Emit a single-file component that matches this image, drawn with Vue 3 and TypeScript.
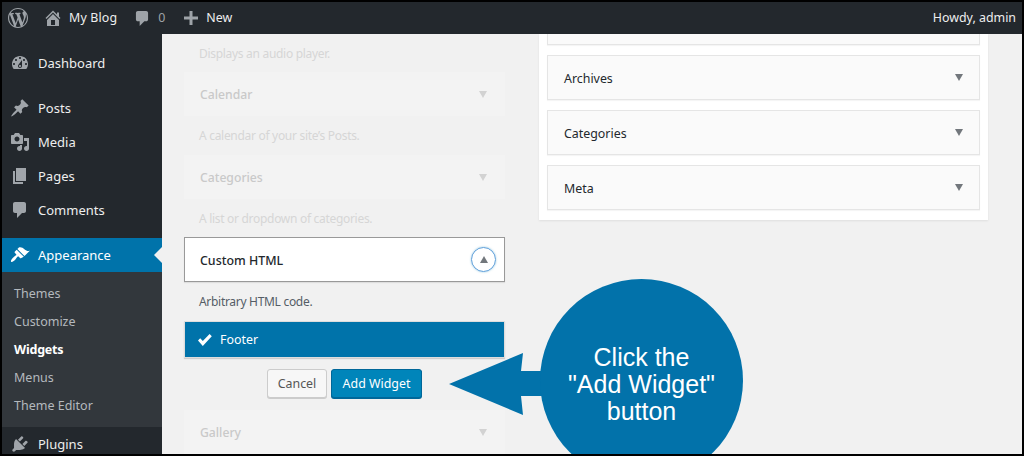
<script setup lang="ts">
const P = {
  wp: 'M20 10c0-5.51-4.49-10-10-10C4.48 0 0 4.49 0 10c0 5.52 4.48 10 10 10 5.51 0 10-4.48 10-10zM7.78 15.37L4.37 6.22c.55-.02 1.17-.08 1.17-.08.5-.06.44-1.13-.06-1.11 0 0-1.45.11-2.37.11-.18 0-.37 0-.58-.01C4.12 2.69 6.87 1.11 10 1.11c2.33 0 4.45.87 6.05 2.34-.68-.11-1.65.39-1.65 1.58 0 .74.45 1.36.9 2.1.35.61.55 1.36.55 2.46 0 1.49-1.4 5-1.4 5l-3.03-8.37c.54-.02.82-.17.82-.17.5-.05.44-1.25-.06-1.22 0 0-1.44.12-2.38.12-.87 0-2.33-.12-2.33-.12-.5-.03-.56 1.2-.06 1.22l.92.08 1.26 3.41zM17.41 10c.24-.64.74-1.87.43-4.25.7 1.29 1.05 2.71 1.05 4.25 0 3.29-1.73 6.24-4.4 7.78.97-2.59 1.94-5.2 2.92-7.78zM6.1 18.09C3.12 16.65 1.11 13.53 1.11 10c0-1.3.23-2.48.72-3.59C3.25 10.3 4.67 14.2 6.1 18.09zm4.03-6.63l2.58 6.98c-.86.29-1.76.45-2.71.45-.79 0-1.57-.11-2.29-.33.81-2.38 1.62-4.74 2.42-7.1z',
  home: 'M16 8.5l1.53 1.53-1.06 1.06L10 4.62l-6.47 6.47-1.06-1.06L10 2.5l4 4v-2h2v4zm-6-2.46l6 5.99V18H4v-5.97zM12 17v-5H8v5h4z',
  comment: 'M5 2h9c1.1 0 2 .9 2 2v7c0 1.1-.9 2-2 2h-2l-5 5v-5H5c-1.1 0-2-.9-2-2V4c0-1.1.9-2 2-2z',
  plus: 'M17 8.5v3h-5.5V17h-3v-5.5H3v-3h5.5V3h3v5.5z',
  dash: 'M3.76 16h12.48c1.1-1.37 1.76-3.11 1.76-5 0-4.42-3.58-8-8-8s-8 3.58-8 8c0 1.89.66 3.63 1.76 5zM10 4c.55 0 1 .45 1 1s-.45 1-1 1-1-.45-1-1 .45-1 1-1zM6 6c.55 0 1 .45 1 1s-.45 1-1 1-1-.45-1-1 .45-1 1-1zm8 0c.55 0 1 .45 1 1s-.45 1-1 1-1-.45-1-1 .45-1 1-1zm-5.37 5.55L12 7v6c0 1.1-.9 2-2 2s-2-.9-2-2c0-.57.24-1.08.63-1.45zM4 10c.55 0 1 .45 1 1s-.45 1-1 1-1-.45-1-1 .45-1 1-1zm12 0c.55 0 1 .45 1 1s-.45 1-1 1-1-.45-1-1 .45-1 1-1zm-5 3c0-.55-.45-1-1-1s-1 .45-1 1 .45 1 1 1 1-.45 1-1z',
  pin: 'M10.44 3.02l1.82-1.82 6.36 6.35-1.83 1.82c-1.05-.68-2.48-.57-3.41.36l-.75.75c-.92.93-1.04 2.35-.35 3.41l-1.83 1.82-2.41-2.41-2.8 2.79c-.42.42-3.38 2.71-3.8 2.29s1.86-3.39 2.28-3.81l2.79-2.79L4.1 9.36l1.83-1.82c1.05.69 2.48.57 3.4-.36l.75-.75c.93-.92 1.05-2.35.36-3.41z',
  media: 'M13 11V4c0-.55-.45-1-1-1h-1.67L9 1H5L3.67 3H2c-.55 0-1 .45-1 1v7c0 .55.45 1 1 1h10c.55 0 1-.45 1-1zM7 4.5c1.38 0 2.5 1.12 2.5 2.5S8.38 9.5 7 9.5 4.5 8.38 4.5 7 5.62 4.5 7 4.5zM14 6h5v10.5c0 1.38-1.12 2.5-2.5 2.5S14 17.88 14 16.5s1.12-2.5 2.5-2.5c.17 0 .34.02.5.05V9h-3V6zm-4 8.05V13h2v3.5c0 1.38-1.12 2.5-2.5 2.5S7 17.88 7 16.5 8.12 14 9.5 14c.17 0 .34.02.5.05z',
  pages: 'M6 15V2h10v13H6zm-1 1h8v2H3V5h2v11z',
  brush: 'M14.48 11.06L7.41 3.99l1.5-1.5c.5-.56 2.3-.47 3.51.32 1.21.8 1.43 1.28 2.91 2.1 1.18.64 2.45 1.26 4.45.85zm-.71.71L6.7 4.7 4.93 6.47c-.39.39-.39 1.02 0 1.41l1.06 1.06c.39.39.39 1.03 0 1.42-.6.6-1.43 1.11-2.21 1.69-.35.26-.7.53-1.01.84-1.34 1.34-2.37 3.04-1.62 3.79.75.75 2.45-.28 3.79-1.62.31-.31.58-.66.84-1.01.58-.78 1.09-1.61 1.69-2.21.39-.39 1.03-.39 1.42 0l1.06 1.06c.39.39 1.02.39 1.41 0z',
  plug: 'M13.11 4.36L9.87 7.6 8 5.73l3.24-3.24c.35-.34 1.05-.2 1.56.32.52.51.66 1.21.31 1.55zm-8 1.77l.91-1.12 9.01 9.01-1.19.84c-.71.71-2.63 1.16-3.82 1.16H6.14L4.9 17.26c-.59.59-1.54.59-2.12 0-.59-.58-.59-1.53 0-2.12l1.24-1.24v-3.88c0-1.13.4-3.19 1.09-3.89zm7.26 3.97l3.24-3.24c.34-.35 1.04-.21 1.55.31.52.51.66 1.21.31 1.55l-3.24 3.25z',
}
const topItems = [
  { label: 'Posts', icon: P.pin },
  { label: 'Media', icon: P.media },
  { label: 'Pages', icon: P.pages },
  { label: 'Comments', icon: P.comment },
]
const subItems = ['Themes', 'Customize', 'Widgets', 'Menus', 'Theme Editor']
const dimWidgets = [
  { title: 'Calendar', desc: 'A calendar of your site\u2019s Posts.' },
  { title: 'Categories', desc: 'A list or dropdown of categories.' },
]
const rightWidgets = ['Archives', 'Categories', 'Meta']
</script>

<template>
  <div class="frame">
    <header class="adminbar">
      <svg class="wp" viewBox="0 0 20 20"><path :d="P.wp" /></svg>
      <svg class="home" viewBox="0 0 20 20"><path :d="P.home" /></svg>
      <span class="blog">My Blog</span>
      <svg class="bubble" viewBox="2 1 15 17"><path :d="P.comment" /></svg>
      <span class="count">0</span>
      <svg class="plus" viewBox="3 3 14 14"><path :d="P.plus" /></svg>
      <span class="new">New</span>
      <span class="howdy">Howdy, admin</span>
    </header>
    <div class="body">
      <nav class="sidebar">
        <a class="item first"><svg viewBox="0 0 20 20"><path :d="P.dash" /></svg>Dashboard</a>
        <div class="sep"></div>
        <a v-for="it in topItems" :key="it.label" class="item">
          <svg viewBox="0 0 20 20"><path :d="it.icon" /></svg>{{ it.label }}
        </a>
        <div class="sep"></div>
        <a class="item active"><svg viewBox="0 0 20 20"><path :d="P.brush" /></svg>Appearance<i class="notch"></i></a>
        <ul class="sub">
          <li v-for="s in subItems" :key="s" :class="{ cur: s === 'Widgets' }">{{ s }}</li>
        </ul>
        <a class="item"><svg viewBox="0 0 20 20"><path :d="P.plug" /></svg>Plugins</a>
      </nav>
      <main class="content">
        <section class="available">
          <p class="desc dim first-desc">Displays an audio player.</p>
          <template v-for="w in dimWidgets" :key="w.title">
            <div class="wbox dimbox"><span>{{ w.title }}</span><i class="tri"></i></div>
            <p class="desc dim">{{ w.desc }}</p>
          </template>
          <div class="wbox open">
            <span>Custom HTML</span>
            <b class="toggle"><i class="tri up"></i></b>
          </div>
          <p class="desc">Arbitrary HTML code.</p>
          <div class="chooser">
            <svg viewBox="0 0 16 14"><path d="M1 7.5l2.2-2.2 2.6 2.7L12.6 1l2.2 2.2-9 9.8z" /></svg>
            Footer
          </div>
          <div class="actions">
            <button class="btn cancel">Cancel</button>
            <button class="btn primary">Add Widget</button>
          </div>
          <div class="wbox dimbox gallery"><span>Gallery</span><i class="tri"></i></div>
        </section>
        <aside class="panel">
          <div class="rbox stub"></div>
          <div v-for="r in rightWidgets" :key="r" class="rbox"><span>{{ r }}</span><i class="tri"></i></div>
        </aside>
      </main>
    </div>
    <div class="callout">
      <svg class="arrow" viewBox="0 0 100 62"><path d="M0 31L74 0l-2 18h28v25H72l2 19z" /></svg>
      <div class="bubble-big">Click the<br />"Add Widget"<br />button</div>
    </div>
  </div>
</template>

<style>
html, body { margin: 0; background: #000; }
</style>

<style scoped>
.frame {
  position: relative; box-sizing: border-box; width: 1024px; height: 456px;
  border: 2px solid #000; overflow: hidden; background: #f1f1f1;
  font-family: "Noto Sans", "Open Sans", sans-serif; font-size: 12.4px; color: #23282d;
  display: flex; flex-direction: column;
}
svg { fill: currentColor; display: block; flex: none; }
.adminbar {
  height: 32px; flex: none; background: #23282d; color: #eee; display: flex; align-items: center; padding-bottom: 1px; box-sizing: border-box;
}
.adminbar svg { color: #9ea3a8; }
.wp { width: 20px; height: 20px; margin-left: 6px; }
.home { width: 20px; height: 20px; margin-left: 15px; }
.blog { margin-left: 6px; letter-spacing: .15px; }
.bubble { width: 14px; height: 16px; margin-left: 18px; }
.count { margin-left: 9px; color: #9ea3a8; }
.plus { width: 14px; height: 14px; margin-left: 19px; }
.new { margin-left: 8px; }
.howdy { margin-left: auto; margin-right: 6px; }
.body { flex: 1; min-height: 0; display: flex; }
.sidebar { width: 160px; flex: none; background: #23282d; color: #eee; }
.item {
  position: relative; height: 34px; display: flex; align-items: center; font-size: 13px; color: #eee; padding-bottom: 1px; box-sizing: border-box;
}
.item svg { width: 20px; height: 20px; margin: 0 8px; color: #a0a5aa; }
.first { margin-top: 12px; }
.sep { height: 11px; }
.active { background: #0073aa; color: #fff; }
.active svg { color: #fff; }
.notch {
  position: absolute; right: 0; top: 9px; border: 8px solid transparent; border-right-color: #f1f1f1; border-left: 0;
}
.sub { margin: 0; padding: 8px 0 7px; list-style: none; background: #32373c; color: #b4b9be; font-size: 12.5px; }
.sub li { height: 28px; line-height: 28px; padding-left: 12px; }
.sub .cur { color: #fff; font-weight: 700; letter-spacing: -.2px; }
.content { flex: 1; min-width: 0; display: flex; align-items: flex-start; }
.available { width: 321px; margin-left: 22px; }
.desc { margin: 0; height: 39px; line-height: 40px; padding-left: 15px; color: #555d66; font-size: 12px; letter-spacing: -.3px; }
.first-desc { height: 38px; line-height: 39px; }
.dim { color: #d6d6d6; }
.wbox {
  box-sizing: border-box; height: 44px; display: flex; align-items: center; justify-content: space-between;
  padding: 0 18px 0 16px; font-weight: 500; position: relative; font-size: 12.2px;
}
.dimbox { background: #f3f3f3; color: #c9c9c9; }
.dimbox .tri { border-top-color: #d2d2d2; }
.open { height: 45px; margin-top: -1px; background: #fff; border: 1px solid #999; box-shadow: 0 1px 1px rgba(0,0,0,.08); color: #23282d; padding-left: 15px; padding-top: 1px; font-size: 12.4px; }
.tri {
  width: 0; height: 0; border-left: 4.5px solid transparent; border-right: 4.5px solid transparent;
  border-top: 7px solid #72777c; display: block;
}
.tri.up { border-top: 0; border-bottom: 7px solid #72777c; }
.toggle {
  position: absolute; right: 8px; top: 9px; box-sizing: border-box; width: 25px; height: 25px; border-radius: 50%;
  border: 1px solid #5b9dd9; box-shadow: 0 0 2px rgba(30,140,190,.5); display: flex; align-items: center; justify-content: center;
}
.chooser {
  box-sizing: border-box; height: 37px; background: #0073aa; color: #fff; display: flex; align-items: center;
  padding-left: 13px; gap: 7px; box-shadow: 0 1px 1px rgba(0,0,0,.15); outline: 1px solid #ddd; outline-offset: -1px;
}
.chooser svg { width: 16px; height: 14px; }
.actions { display: flex; justify-content: flex-start; gap: 4px; margin-top: 11px; padding-left: 83px; }
.btn {
  box-sizing: border-box; height: 29px; padding: 0; border: 1px solid #ccc; border-radius: 3px; background: #f7f7f7;
  font: inherit; color: #555; box-shadow: 0 1px 0 #ccc;
}
.cancel { width: 60px; }
.primary { width: 91px; background: #0085ba; border-color: #006799; color: #fff; box-shadow: 0 1px 0 #006799; }
.gallery { margin-top: 12px; }
.panel {
  box-sizing: border-box; width: 449px; margin-left: 34px; padding: 0 8px 10px; background: #fff;
  box-shadow: 0 1px 2px rgba(0,0,0,.08); display: flex; flex-direction: column; gap: 10px;
}
.rbox {
  box-sizing: border-box; height: 45px; background: #fafafa; border: 1px solid #e5e5e5;
  box-shadow: 0 1px 1px rgba(0,0,0,.04); display: flex; align-items: center; justify-content: space-between;
  padding: 1px 16px 0; font-weight: 400; color: #23282d; font-size: 12.4px;
}
.rbox .tri { margin-top: -2px; }
.rbox.stub { height: 11px; border-top: 0; }
.callout { position: absolute; left: 447px; top: 277px; display: flex; align-items: center; }
.arrow { width: 100px; height: 62px; color: #0272aa; margin-right: -9px; margin-top: 7px; }
.bubble-big {
  box-sizing: border-box; padding-top: 8px; width: 203px; height: 203px; border-radius: 50%; background: #0272aa; color: #fff; flex: none;
  font-family: "Liberation Sans", Arial, sans-serif; font-size: 25px; line-height: 27px; text-align: center;
  display: flex; align-items: center; justify-content: center;
}
</style>
